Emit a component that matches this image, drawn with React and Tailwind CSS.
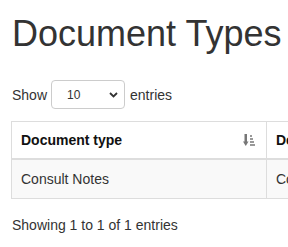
import React from 'react';

const SortIcon = () => (
  <svg width="12" height="14" viewBox="0 0 12 14" className="text-[#777]">
    <rect x="1.5" y="1" width="2.5" height="8" fill="currentColor" />
    <path d="M0 8.5 L5.5 8.5 L2.75 13 Z" fill="currentColor" />
    <rect x="7" y="2" width="2" height="2" fill="currentColor" opacity="0.75" />
    <rect x="7" y="5" width="3" height="2" fill="currentColor" opacity="0.75" />
    <rect x="7" y="8" width="4" height="2" fill="currentColor" opacity="0.75" />
    <rect x="7" y="11" width="5" height="2" fill="currentColor" opacity="0.75" />
  </svg>
);

const App = () => {
  const rows = [{ type: "Consult Notes", desc: "Consult Notes" }];

  return (
    <div className="w-[288px] h-[247px] overflow-hidden bg-white text-[#333] font-['Liberation_Sans',Arial,sans-serif] text-[14px] leading-[20px]">
      <div className="pl-[11px]">
        <h1 className="text-[36px] leading-[40px] pt-[14px] pl-[1px] text-[#333]">Document Types</h1>

        <div className="flex items-center mt-[26px] pl-[1px]">
          <span>Show</span>
          <div className="ml-[4px] w-[74px] h-[29px] border border-[#ccc] rounded-[4px] flex items-center justify-between pl-[15px] pr-[6px]">
            <span className="text-[12px]">10</span>
            <svg width="9" height="6" viewBox="0 0 9 6">
              <path d="M1 1 L4.5 4.5 L8 1" stroke="#333" strokeWidth="1.8" fill="none" />
            </svg>
          </div>
          <span className="ml-[5px]">entries</span>
        </div>

        <table className="mt-[12px] border-collapse border border-[#ddd] w-[600px] table-fixed">
          <thead>
            <tr>
              <th className="w-[255px] border border-[#ddd] border-b-2 px-[9px] py-[8px] text-left font-bold text-[#111]">
                <div className="flex items-center justify-between pr-[2px]">
                  <span>Document type</span>
                  <SortIcon />
                </div>
              </th>
              <th className="border border-[#ddd] border-b-2 px-[9px] py-[8px] text-left font-bold text-[#111]">Description</th>
            </tr>
          </thead>
          <tbody>
            {rows.map((r, i) => (
              <tr key={i} className="bg-[#f9f9f9]">
                <td className="border border-[#ddd] px-[9px] py-[9px]">{r.type}</td>
                <td className="border border-[#ddd] px-[9px] py-[9px]">{r.desc}</td>
              </tr>
            ))}
          </tbody>
        </table>

        <div className="mt-[16px] pl-[1px]">Showing 1 to 1 of 1 entries</div>
      </div>
    </div>
  );
};

export default App;
